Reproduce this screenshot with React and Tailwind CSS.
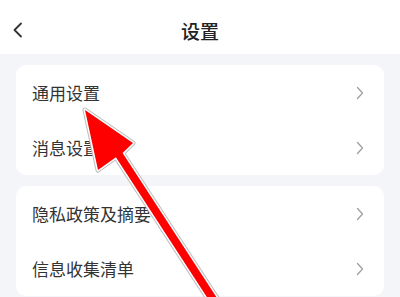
const font = { fontFamily: '"Noto Sans CJK SC", "Noto Sans", sans-serif' };

const Chevron = () => (
  <svg width="8" height="14" viewBox="0 0 8 14" fill="none">
    <path d="M1.5 1.5 L6.5 7 L1.5 12.5" stroke="#a0a0a0" strokeWidth="1.3" strokeLinecap="round" strokeLinejoin="round" />
  </svg>
);

const Row = ({ label }) => (
  <div className="h-[55px] flex items-center justify-between pl-4 pr-[20px]">
    <span className="text-[17px] text-[#333]">{label}</span>
    <Chevron />
  </div>
);

const arrow = 'M85 110 L133 143 L122.6 153.1 L229.9 317.8 L223.2 322.2 L115.9 157.2 L98 170 Z';

export default function App() {
  return (
    <div className="relative w-[400px] h-[297px] overflow-hidden bg-[#f3f5f8]" style={font}>
      {/* Header */}
      <div className="h-[54px] bg-white relative flex items-center justify-center pt-[8px]">
        <svg className="absolute left-[12px] top-[22px]" width="12" height="16" viewBox="0 0 12 16" fill="none">
          <path d="M9 1.5 L2.5 8 L9 14.5" stroke="#333" strokeWidth="1.8" strokeLinecap="round" strokeLinejoin="round" />
        </svg>
        <span className="text-[19px] font-medium text-[#222]">设置</span>
      </div>

      <div className="px-4 pt-[11px] flex flex-col gap-[11px]">
        <div className="bg-white rounded-[10px]">
          <Row label="通用设置" />
          <Row label="消息设置" />
        </div>
        <div className="bg-white rounded-[10px]">
          <Row label="隐私政策及摘要" />
          <Row label="信息收集清单" />
        </div>
      </div>

      {/* Red arrow overlay */}
      <svg className="absolute left-0 top-0" width="400" height="297" viewBox="0 0 400 297">
        <path d={arrow} fill="none" stroke="#bdbdbd" strokeWidth="5" strokeLinejoin="round" />
        <path d={arrow} fill="none" stroke="#ffffff" strokeWidth="3" strokeLinejoin="round" />
        <path d={arrow} fill="#fe0000" />
      </svg>
    </div>
  );
}
